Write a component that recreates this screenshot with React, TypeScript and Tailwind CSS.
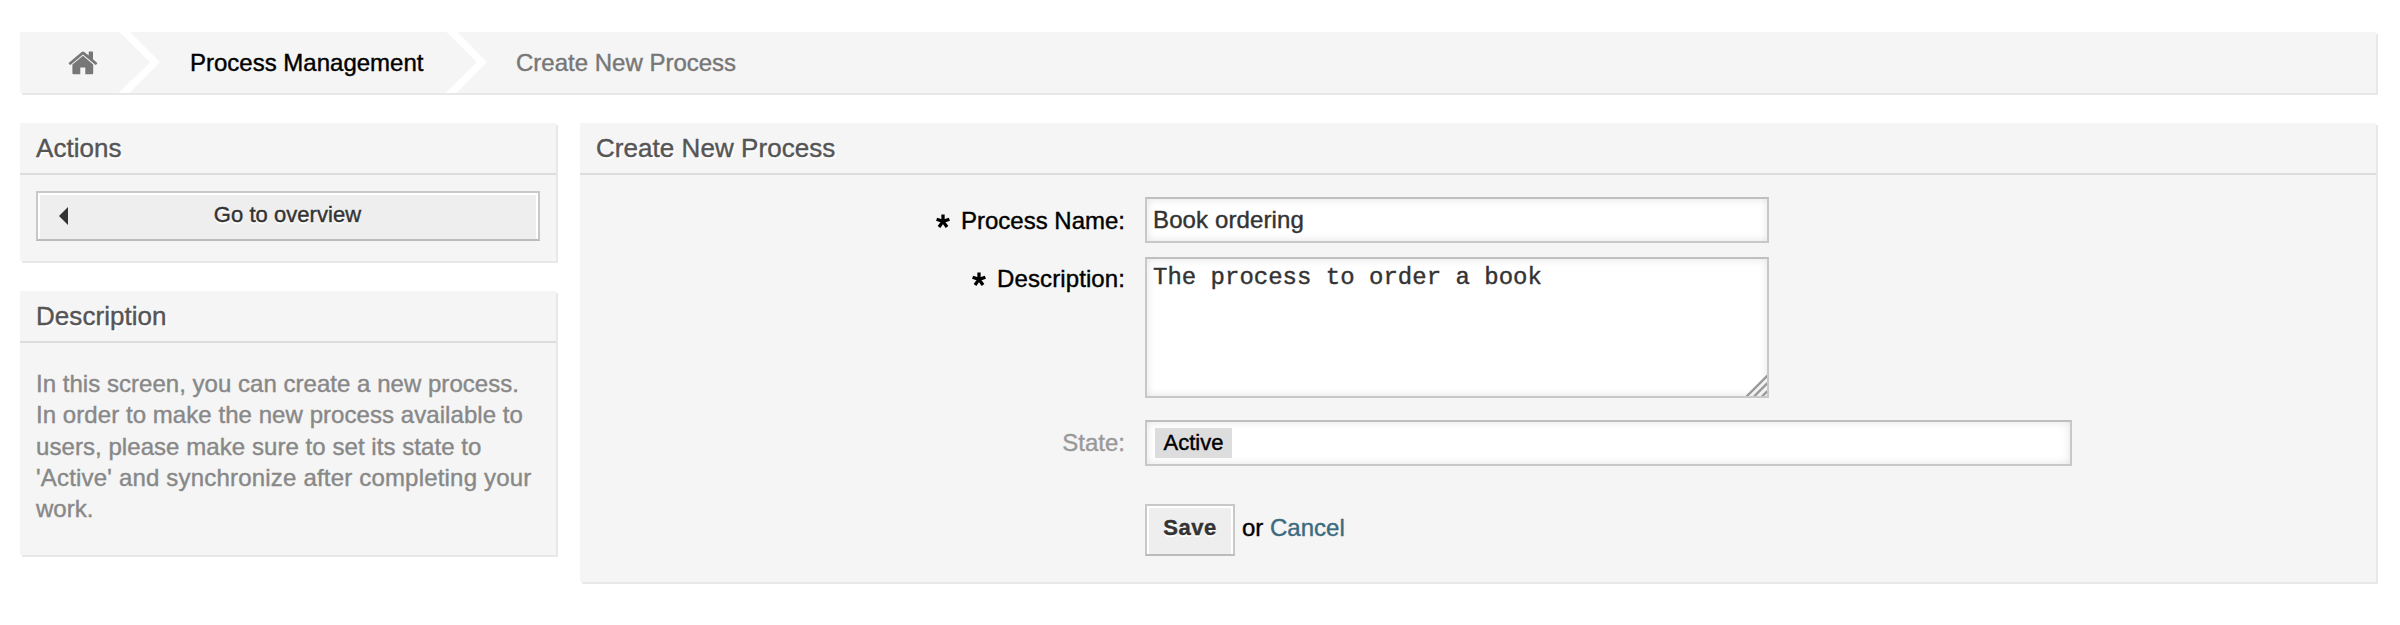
import type { ReactNode } from "react";

function Crumb({ children, className }: { children: ReactNode; className: string }) {
  return (
    <div className={`flex h-full items-center ${className}`}>
      {children}
    </div>
  );
}

function Chevron() {
  return (
    <svg width="42" height="61" viewBox="0 0 42 61" className="shrink-0">
      <path d="M0.5 0H11L41 30.3L10 61H-0.5L31 30.3Z" fill="#fff" />
    </svg>
  );
}

function Panel({ title, className, children }: { title: string; className: string; children: ReactNode }) {
  return (
    <section className={`bg-[#f5f5f5] shadow-[2px_2px_0_#e8e8e8] ${className}`}>
      <h2 className="flex h-[52px] items-center border-b-2 border-[#dcdcdc] pb-px pl-4 text-[26px] leading-[30px] tracking-[0.05px] text-[#555] [text-shadow:2px_2px_0_#fff]">
        {title}
      </h2>
      {children}
    </section>
  );
}

function Label({ required, className, children }: { required?: boolean; className: string; children: ReactNode }) {
  return (
    <div className={`flex w-[545px] shrink-0 items-center justify-end ${className}`}>
      {required && (
        <svg width="14" height="14" viewBox="0 0 14 14" className="mt-[1px] mr-[11px]">
          <path d="M7 7.4V0.4M7 7.4L0.6 5.2M7 7.4L13.4 5.2M7 7.4L3 13M7 7.4L11 13" stroke="#000" strokeWidth="3.3" fill="none" />
        </svg>
      )}
      <span>{children}</span>
    </div>
  );
}

const fieldBox =
  "border-2 border-[#c8c8c8] border-t-[#bfbfbf] bg-white shadow-[inset_0_0_8px_#e2e2e2]";

export default function App() {
  return (
    <div className="h-[625px] w-[2400px] bg-white pt-8 pr-6 pl-5 font-['Liberation_Sans',Arial,sans-serif] text-[24px] leading-[28px] text-black [-webkit-text-stroke:0.4px]">
      <nav className="flex h-[61px] items-center bg-[#f5f5f5] shadow-[2px_2px_0_#e8e8e8]">
        <Crumb className="w-[99px] pl-[48px]">
          <svg width="30" height="24" viewBox="0 0 30 24" fill="#777">
            <path d="M15 4.7L4.4 13.5V22.2Q4.4 23.2 5.4 23.2H12.3V16.4H17.3V23.2H24.2Q25.2 23.2 25.2 22.2V13.5Z" />
            <path d="M29 11.7L25 8.3V1Q25 .5 24.5 .5H21.2Q20.7 .5 20.7 1V4.6L16.6 1.2Q15 -.1 13.4 1.2L.9 11.7Q.4 12.2 .8 12.6L1.8 13.8Q2.2 14.1 2.7 13.8L15 3.5L27.3 13.8Q27.7 14.1 28.1 13.8L29.2 12.6Q29.5 12.1 29 11.7Z" />
          </svg>
        </Crumb>
        <Chevron />
        <Crumb className="w-[285px] pl-[29px]">Process Management</Crumb>
        <Chevron />
        <Crumb className="pl-[28px] text-[#777]">Create New Process</Crumb>
      </nav>

      <div className="mt-[30px] flex items-start gap-6">
        <aside className="flex w-[536px] shrink-0 flex-col gap-[30px]">
          <Panel title="Actions" className="h-[138px]">
            <div className="px-4 pt-4">
              <button className="grid h-[50px] w-full grid-cols-[40px_1fr_40px] items-center border-2 border-[#c8c8c8] border-b-[#bbb] bg-[#eee] pb-[2px] text-[22px] text-[#333] shadow-[inset_2px_2px_0_#fff,inset_-2px_0_0_#fff] [text-shadow:0_2px_0_#fff]">
                <svg width="9" height="18" viewBox="0 0 9 18" className="mt-[1px] ml-[21px]">
                  <path d="M9 0V18L0 9Z" fill="#333" />
                </svg>
                <span className="pr-px tracking-[0.05px]">Go to overview</span>
              </button>
            </div>
          </Panel>
          <Panel title="Description" className="h-[264px]">
            <p className="px-4 pt-[25px] leading-[31.3px] whitespace-nowrap text-[#888]">
              <span className="tracking-[0.03px]">In this screen, you can create a new process.</span>
              <br />
              <span className="tracking-[0.06px]">In order to make the new process available to</span>
              <br />
              <span className="tracking-[0.06px]">users, please make sure to set its state to</span>
              <br />
              <span className="tracking-[0.19px]">'Active' and synchronize after completing your</span>
              <br />
              work.
            </p>
          </Panel>
        </aside>

        <Panel title="Create New Process" className="h-[459px] grow">
          <form className="flex flex-col pt-[22px]">
            <div className="flex h-[46px] gap-5">
              <Label required className="h-[47px]">Process Name:</Label>
              <div className={`flex w-[624px] items-center pl-[6px] tracking-[0.12px] text-[#333] ${fieldBox}`}>Book ordering</div>
            </div>
            <div className="mt-[14px] flex h-[141px] gap-5">
              <Label required className="h-[43px] tracking-[0.1px]">Description:</Label>
              <div className={`relative w-[624px] pt-[5px] pl-[6px] font-['Liberation_Mono',monospace] text-[#333] ${fieldBox}`}>
                The process to order a book
                <svg width="22" height="22" viewBox="0 0 22 22" className="absolute right-0 bottom-0">
                  <path d="M2 22L22 2V22Z" fill="#f2f2f2" />
                  <path d="M1.5 22.5L22.5 1.5M9 22.5L22.5 9M17 22.5L22.5 17" stroke="#999" strokeWidth="2.4" />
                </svg>
              </div>
            </div>
            <div className="mt-[22px] flex h-[46px] gap-5">
              <Label className="h-[46px] text-[#999]">State:</Label>
              <div className={`w-[927px] pt-[6px] pl-2 ${fieldBox}`}>
                <span className="flex h-[30px] w-[77px] items-center justify-center bg-[#ddd] text-[22px]">Active</span>
              </div>
            </div>
            <div className="mt-[38px] ml-[565px] flex h-[52px] items-center">
              <button className="h-[52px] w-[90px] border-2 border-[#c8c8c8] border-b-[#bbb] bg-[#eee] pb-1 text-[22px] font-bold tracking-[0.5px] text-[#333] shadow-[inset_2px_2px_0_#fff,inset_-2px_0_0_#fff] [text-shadow:0_2px_0_#fff]">
                Save
              </button>
              <span className="pb-[5px] pl-[7px]">
                or <a className="text-[#3b6b80]">Cancel</a>
              </span>
            </div>
          </form>
        </Panel>
      </div>
    </div>
  );
}
